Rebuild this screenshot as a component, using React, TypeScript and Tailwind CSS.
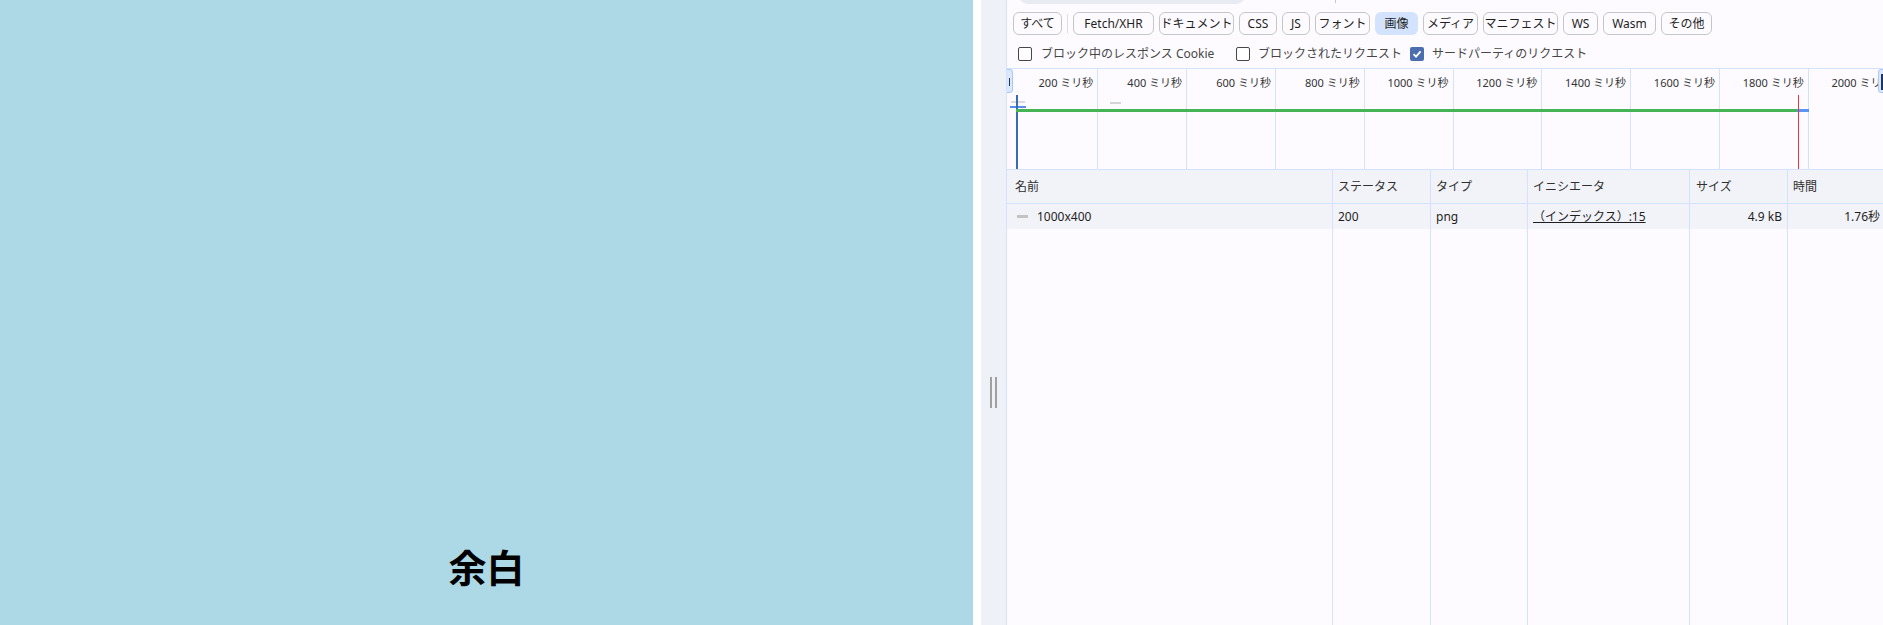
const font = "font-['Noto_Sans','Noto_Sans_CJK_JP',sans-serif]";

type Filter = { label: string; w: string; active?: boolean };

const filters: Filter[] = [
  { label: "Fetch/XHR", w: "w-[81px]" },
  { label: "ドキュメント", w: "w-[75px]" },
  { label: "CSS", w: "w-[38px]" },
  { label: "JS", w: "w-[28px]" },
  { label: "フォント", w: "w-[55px]" },
  { label: "画像", w: "w-[43px]", active: true },
  { label: "メディア", w: "w-[55px]" },
  { label: "マニフェスト", w: "w-[75px]" },
  { label: "WS", w: "w-[35px]" },
  { label: "Wasm", w: "w-[53px]" },
  { label: "その他", w: "w-[51px]" },
];

const cols = [
  { w: "w-[325px]", pad: "pl-[8px]" },
  { w: "w-[98px]", pad: "pl-[5px] border-l border-[#d3e3fd]" },
  { w: "w-[97px]", pad: "pl-[5px] border-l border-[#d3e3fd]" },
  { w: "w-[162px]", pad: "pl-[5px] border-l border-[#d3e3fd]" },
  { w: "w-[98px]", pad: "pl-[6px] pr-[5px] border-l border-[#d3e3fd]" },
  { w: "flex-1", pad: "pl-[5px] pr-[3px] border-l border-[#d3e3fd]" },
];

const headers = ["名前", "ステータス", "タイプ", "イニシエータ", "サイズ", "時間"];

const FilterButton = ({ label, w, active }: Filter) => (
  <div
    className={`${w} h-[23px] flex items-center justify-center rounded-[6px] text-[12px] leading-none text-[#1f1f1f] ${
      active ? "bg-[#d3e3fd]" : "border border-[#c4c7c5]"
    }`}
  >
    {label}
  </div>
);

const Check = ({ checked }: { checked?: boolean }) =>
  checked ? (
    <div className="w-[14px] h-[14px] rounded-[2px] bg-[#4b6eaf] flex items-center justify-center">
      <svg width="10" height="10" viewBox="0 0 10 10">
        <path d="M1.5 5.2 L4 7.6 L8.6 2.4" stroke="white" strokeWidth="1.8" fill="none" />
      </svg>
    </div>
  ) : (
    <div className="w-[14px] h-[14px] rounded-[2px] border-[1.5px] border-[#474747] bg-white" />
  );

const Timeline = () => (
  <div className="relative h-[101px] border-t border-[#d3e3fd] overflow-hidden">
    {Array.from({ length: 10 }, (_, i) => {
      const x = 1.5 + 88.8 * (i + 1);
      return (
        <div key={i}>
          <div className="absolute top-0 bottom-0 w-px bg-[#d3e3fd]" style={{ left: x }} />
          <div
            className="absolute top-[7px] text-[11px] leading-[14px] text-[#333] whitespace-nowrap text-right"
            style={{ right: `calc(100% - ${x - 4}px)` }}
          >
            {(i + 1) * 200} ミリ秒
          </div>
        </div>
      );
    })}
    {/* range handles */}
    <div className="absolute left-[-3px] top-0 w-[9px] h-[24px] rounded-[3px] bg-[#dbe7fd] border border-[#a8c7fa]">
      <div className="ml-[4px] mt-[8px] w-px h-[8px] bg-[#1f3760]" />
    </div>
    <div className="absolute left-[871px] top-0 w-[10px] h-[24px] rounded-[3px] bg-[#dbe7fd] border border-[#a8c7fa]">
      <div className="ml-[2px] mt-[4px] w-[2px] h-[16px] bg-[#1f3760]" />
    </div>
    {/* request bars */}
    <div className="absolute left-[4px] top-[32px] w-[14px] h-[2px] bg-[#dadada]" />
    <div className="absolute left-[103px] top-[33px] w-[11px] h-[2px] bg-[#d5d5d5]" />
    <div className="absolute left-[3px] top-[37px] w-[16px] h-[2px] bg-[#5b8def]" />
    <div className="absolute left-[9px] top-[26px] bottom-0 w-[2px] bg-[#3d68b8]" />
    <div className="absolute left-[9px] top-[40px] w-[781px] h-[3px] bg-[#45b455]" />
    <div className="absolute left-[790px] top-[40px] w-[12px] h-[3px] bg-[#5a95f5]" />
    <div className="absolute left-[791px] top-[26px] bottom-0 w-px bg-[#e53935]" />
  </div>
);

const App = () => {
  return (
    <div className={`flex h-[625px] w-[1883px] overflow-hidden ${font}`}>
      {/* page */}
      <div className="w-[973px] shrink-0 bg-[#add8e6] flex flex-col justify-end items-center pb-[40px]">
        <h1 className="text-[38px] leading-none font-bold text-black font-['Noto_Sans_CJK_JP',sans-serif]">余白</h1>
      </div>
      <div className="w-[8px] shrink-0 bg-white" />
      <div className="w-[25px] shrink-0 bg-[#eef1f7] pt-[377px] flex justify-center gap-[3px]">
        <div className="w-[2px] h-[31px] bg-[#a0a0a0]" />
        <div className="w-[2px] h-[31px] bg-[#a0a0a0]" />
      </div>

      {/* devtools network panel */}
      <div className="flex-1 min-w-0 flex flex-col bg-[#fdfbff] border-l border-[#d3e3fd] overflow-hidden">
        <div className="relative h-[4px] shrink-0">
          <div className="ml-[10px] w-[230px] h-[4px] overflow-hidden">
            <div className="-mt-[20px] h-[24px] rounded-full bg-[#e9ebf2]" />
          </div>
          <div className="absolute left-[328px] top-0 w-px h-[3px] bg-[#c7c7c7]" />
        </div>

        {/* filter tabs */}
        <div className="flex items-center pt-[8px] pl-[6px] shrink-0">
          <FilterButton label="すべて" w="w-[49px]" />
          <div className="mx-[5px] w-px h-[19px] bg-[#dedede]" />
          <div className="flex gap-[5px]">
            {filters.map((f) => (
              <FilterButton key={f.label} {...f} />
            ))}
          </div>
        </div>

        <div className="h-[33px] pt-[4px] pl-[11px] flex items-center text-[12px] leading-none text-[#474747] shrink-0">
          <div className="w-[218px] flex items-center gap-[9px]">
            <Check />
            <span>ブロック中のレスポンス Cookie</span>
          </div>
          <div className="w-[174px] flex items-center gap-[8px]">
            <Check />
            <span>ブロックされたリクエスト</span>
          </div>
          <div className="flex items-center gap-[8px]">
            <Check checked />
            <span>サードパーティのリクエスト</span>
          </div>
        </div>

        <Timeline />

        {/* table */}
        <div className="flex-1 flex flex-col border-t border-[#d3e3fd] text-[12px] text-[#1f1f1f]">
          <div className="flex h-[34px] bg-[#f2f3f8] border-b border-[#d3e3fd] text-[#303030]">
            {headers.map((h, i) => (
              <div key={h} className={`${cols[i].w} ${cols[i].pad} shrink-0 flex items-center`}>
                {h}
              </div>
            ))}
          </div>
          <div className="flex h-[25px] bg-[#f2f3f8]">
            <div className={`${cols[0].w} ${cols[0].pad} shrink-0 flex items-center gap-[9px] pl-[10px]`}>
              <div className="w-[11px] h-[3px] bg-[#c4c4c4]" />
              <span>1000x400</span>
            </div>
            <div className={`${cols[1].w} ${cols[1].pad} shrink-0 flex items-center`}>200</div>
            <div className={`${cols[2].w} ${cols[2].pad} shrink-0 flex items-center`}>png</div>
            <div className={`${cols[3].w} ${cols[3].pad} shrink-0 flex items-center`}>
              <span className="underline">（インデックス）:15</span>
            </div>
            <div className={`${cols[4].w} ${cols[4].pad} shrink-0 flex items-center justify-end`}>4.9 kB</div>
            <div className={`${cols[5].w} ${cols[5].pad} flex items-center justify-end`}>1.76秒</div>
          </div>
          <div className="flex flex-1">
            {cols.map((c, i) => (
              <div key={i} className={`${c.w} ${c.pad} shrink-0`} />
            ))}
          </div>
        </div>
      </div>
    </div>
  );
};

export default App;
